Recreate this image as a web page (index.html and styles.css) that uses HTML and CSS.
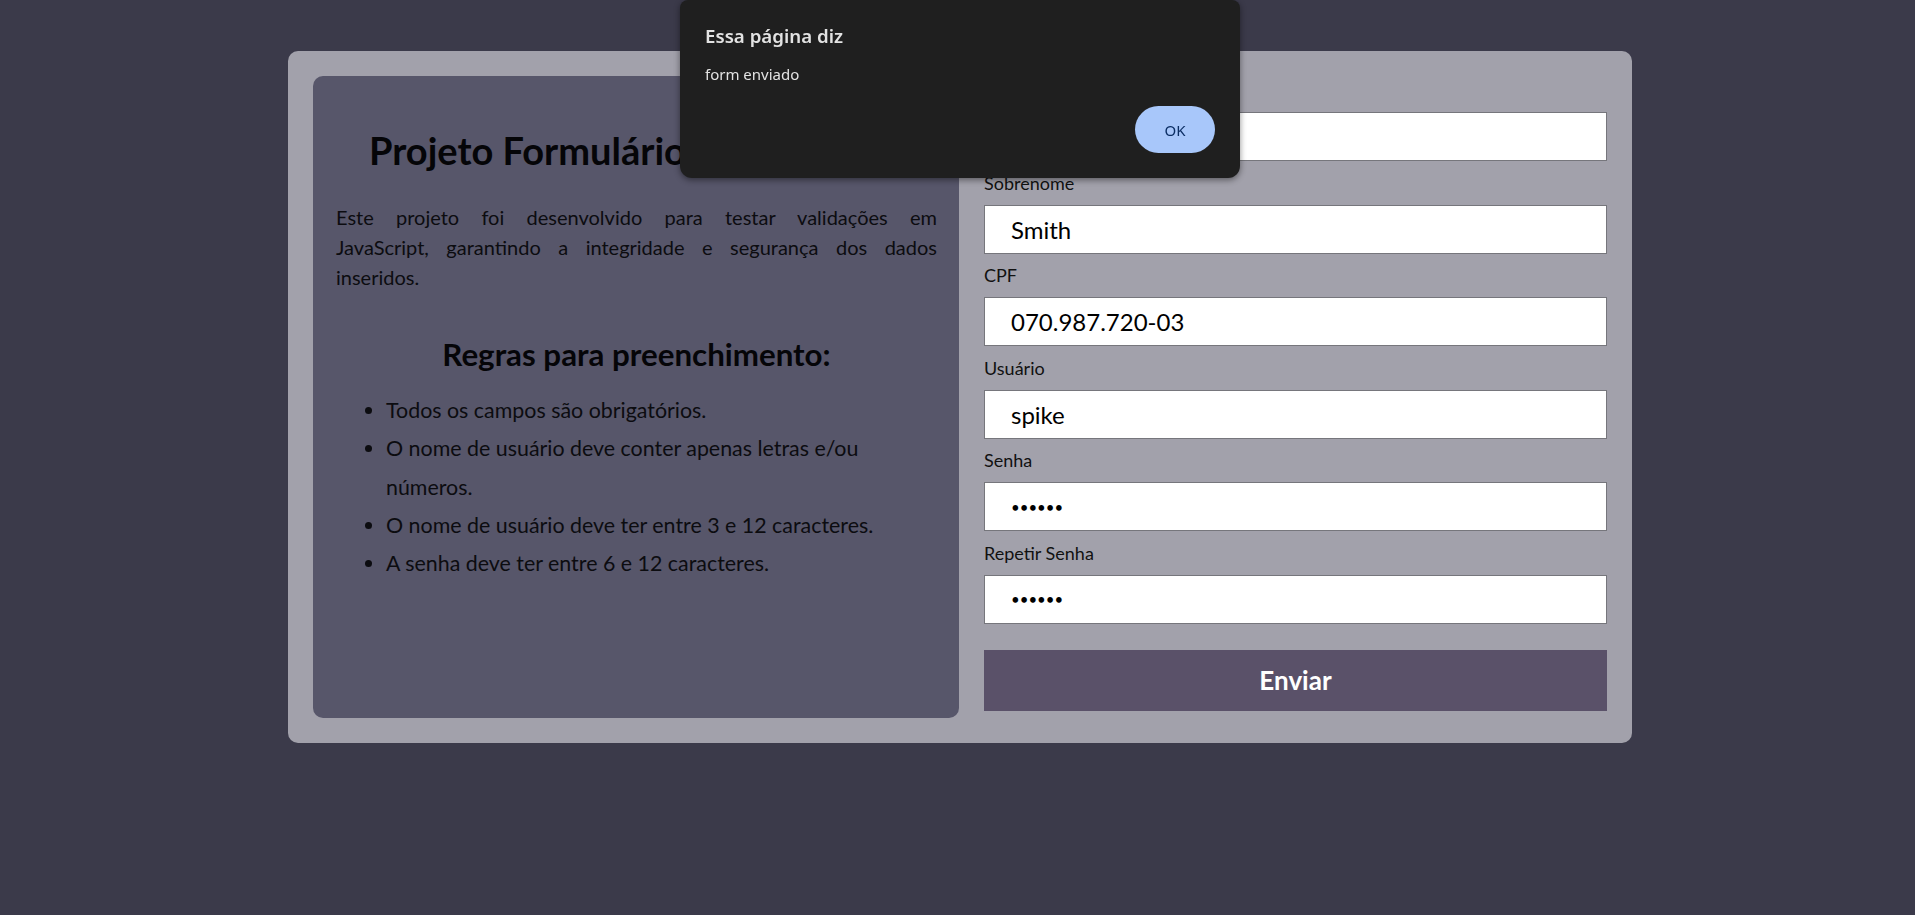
FILE: index.html
```html
<!DOCTYPE html>
<html lang="pt-BR">
<head>
<meta charset="utf-8">
<title>Projeto Formulário</title>
<link rel="stylesheet" href="styles.css">
</head>
<body>
<main class="card">
  <section class="info">
    <h1 class="info-title">Projeto Formulário</h1>
    <p class="info-text">
      <span class="jline">Este projeto foi desenvolvido para testar validações em</span>
      <span class="jline">JavaScript, garantindo a integridade e segurança dos dados</span>
      <span>inseridos.</span>
    </p>
    <h2 class="rules-title">Regras para preenchimento:</h2>
    <ul class="rules">
      <li>Todos os campos são obrigatórios.</li>
      <li>O nome de usuário deve conter apenas letras e/ou<br>números.</li>
      <li>O nome de usuário deve ter entre 3 e 12 caracteres.</li>
      <li>A senha deve ter entre 6 e 12 caracteres.</li>
    </ul>
  </section>
  <form class="form">
    <label class="field-label" for="nome">Nome</label>
    <input class="field-input" id="nome" type="text" value="John">
    <label class="field-label" for="sobrenome">Sobrenome</label>
    <input class="field-input" id="sobrenome" type="text" value="Smith">
    <label class="field-label" for="cpf">CPF</label>
    <input class="field-input" id="cpf" type="text" value="070.987.720-03">
    <label class="field-label" for="usuario">Usuário</label>
    <input class="field-input" id="usuario" type="text" value="spike">
    <label class="field-label" for="senha">Senha</label>
    <input class="field-input field-input--secret" id="senha" type="password" value="123456">
    <label class="field-label" for="senha2">Repetir Senha</label>
    <input class="field-input field-input--secret" id="senha2" type="password" value="123456">
    <button class="submit" type="button">Enviar</button>
  </form>
</main>

<div class="alert" role="alertdialog">
  <div class="alert-title">Essa página diz</div>
  <div class="alert-msg">form enviado</div>
  <button class="alert-ok" type="button">OK</button>
</div>
</body>
</html>
```

FILE: styles.css
```css
* { box-sizing: border-box; }

html, body {
  margin: 0;
  height: 915px;
  overflow: hidden;
}

body {
  background: #3b3a4a;
  font-family: "Lato", "Noto Sans", sans-serif;
  color: #0c0c10;
}

.card {
  margin: 51px 0 0 288px;
  width: 1344px;
  padding: 25px;
  background: #a2a1ab;
  border-radius: 10px;
  display: flex;
  gap: 25px;
}

.info {
  width: 646px;
  flex: none;
  background: #57566a;
  border-radius: 10px;
  padding: 0 22px 0 23px;
}

.info-title {
  margin: 51px 0 0;
  padding-left: 33px;
  font-size: 38px;
  line-height: 46px;
  font-weight: 700;
  color: #050508;
}

.info-text {
  margin: 29px 0 0;
  font-size: 20px;
  line-height: 30px;
}

.jline {
  display: block;
  text-align: justify;
  text-align-last: justify;
}

.rules-title {
  margin: 44px 0 0;
  text-align: center;
  font-size: 31.3px;
  line-height: 36px;
  font-weight: 700;
  color: #050508;
}

.rules {
  margin: 19px 0 0;
  padding-left: 50px;
  font-size: 21.4px;
  line-height: 38.3px;
}

.form {
  width: 623px;
  flex: none;
  display: flex;
  flex-direction: column;
  padding: 4px 0 7px;
}

.field-label {
  font-size: 18px;
  line-height: 20px;
  margin-bottom: 12px;
  color: #111;
}

.field-input {
  height: 49px;
  margin: 0 0 11.6px;
  padding: 0 26px;
  border: 1px solid #76767c;
  border-radius: 0;
  background: #fff;
  font-family: inherit;
  font-size: 24px;
  color: #000;
  outline: none;
}

.field-input--secret {
  font-size: 15px;
}

.submit {
  margin-top: 14.4px;
  height: 61px;
  border: none;
  background: #5a5169;
  color: #fff;
  font-family: inherit;
  font-size: 26px;
  font-weight: 700;
}

.alert {
  position: fixed;
  left: 680px;
  top: 0;
  width: 560px;
  height: 178px;
  padding: 22px 25px 25px;
  background: #1f1f1f;
  border-radius: 8px 8px 12px 12px;
  box-shadow: 0 2px 6px rgba(0, 0, 0, 0.45);
  display: flex;
  flex-direction: column;
  font-family: "Noto Sans", "Open Sans", sans-serif;
  color: #e3e3e3;
}

.alert-title {
  font-size: 18.7px;
  line-height: 28px;
  font-weight: 600;
}

.alert-msg {
  margin-top: 14px;
  font-size: 15px;
  line-height: 20px;
}

.alert-ok {
  margin-top: auto;
  align-self: flex-end;
  width: 80px;
  height: 47px;
  border: none;
  border-radius: 24px;
  background: #a8c7fa;
  color: #0b2e64;
  font-family: "Noto Sans", "Open Sans", sans-serif;
  font-size: 15px;
}
```
